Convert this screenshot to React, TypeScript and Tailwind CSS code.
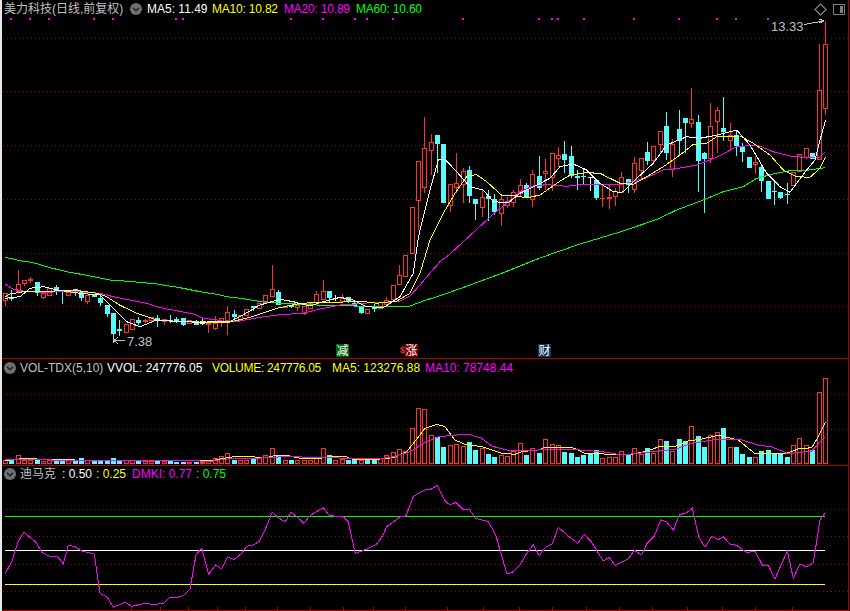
type C = [string, number, number, number?, number?];

const barX = (i: number) => Math.floor(5.33 + 6.357 * i);

const groupA: C[] = [
  ["r",160,180,160,197],["c",170,176,150,183],["r",132,153,90,155],["r",121,129,121,138],["R",117,122,112,128],
  ["c",126,158,126,167],["r",160,170,160,176],["r",143,164],["c",141,157,135,165],["c",153,155,153,191],
  ["r",155,164],["c",148,154,148,167],["c",155,174,155,182],["r",164,183,164,191],["c",166,172],
  ["c",174,188,168,197],["c",195,221,195,230],["c",219,282,219,308],["c",268,272,240,288],["r",252,276,252,280],
  ["r",238,266,238,268],["c",240,250,232,256],["R",240,245,236,250],["r",230,240,230,246],["c",234,240,225,260],
  ["r",236,244,236,255],["c",240,243,225,248],["c",236,243,232,248],["c",235,254,235,258],["r",240,250],
  ["c",244,254,240,256],["w",248,249,238,254],["R",250,256,250,280],["r",249,263,228,270],["r",235,247,235,262],
  ["r",216,240,198,285],["c",222,232,210,240],["r",226,240],["r",208,226],["c",198,203,198,213],
  ["r",190,204],["r",166,187],["r",148,167,75,172],["c",156,194,150,194],["R",198,203],
  ["c",194,200,194,205],["r",195,200,195,212],["r",199,218,199,226],["r",190,204],["r",163,187,153,187],
  ["r",154,177,120,177],["c",154,175,154,188],["w",173,174,165,182],["r",174,183,163,183],["c",172,186,172,190],
  ["c",190,198,180,198],["c",202,219,202,222],["r",207,220],["c",203,205,193,216],["r",185,203],
  ["r",181,192,170,192],["r",136,177],["r",106,132,75,132],["r",45,108],
];
const groupB: C[] = [
  ["r",290,428],["r",154,269,154,360],["r",115,231,22,250],["r",97,119,72,195],["c",75,101,75,188],
  ["c",102,278],["r",223,284,223,305],["r",220,231,130,250],["r",184,223,175,280],["c",181,258,168,278],
  ["c",268,282,268,330],["r",262,292,240,322],["c",258,266,240,333],["c",266,305,252,315],["r",268,310,256,347],
  ["r",272,284,262,293],["r",247,277,240,290],["r",226,248,208,260],["c",225,262,218,262],["r",193,268,180,290],
  ["c",198,233,138,240],["r",184,190,147,240],["r",130,200,130,243],["r",136,143,112,170],["c",132,150,94,188],
  ["c",138,198,108,205],["c",198,203,180,240],["c",198,200,178,222],["w",202,203,200,243],["c",210,264,210,270],
  ["R",264,268,225,290],["R",262,266,225,296],
];
const groupC: C[] = [
  ["r",333,347,325,377],["r",292,335,276,340],["c",298,316,298,340],["r",250,328,232,340],["r",235,270,235,300],
  ["c",216,243,186,255],["r",198,240,198,252],["r",154,191,154,220],["c",138,218,97,240],["r",193,268,178,290],
  ["c",148,182,90,225],["c",115,128,115,220],["r",118,130,25,145],["c",127,243,106,335],["c",220,236,215,398],
  ["r",139,235,68,250],["r",91,122,82,218],["c",144,155,52,182],["r",166,181,130,210],["c",166,198,150,228],
  ["c",200,215,190,245],["c",232,263,232,265],["r",247,253,227,282],["c",262,302,256,335],["c",303,357,303,357],
  ["c",333,334,303,374],["c",337,353,337,358],["c",342,343,310,371],["r",275,314],["r",221,274],
  ["r",205,232,205,238],["c",220,236],["r",31,238,-108,238],["r",-107,85,-177,105],
];

const toY = (base: number, g: C[]) =>
  g.map(([k, t, b, h, l]) => ({
    k,
    top: base + t / 3,
    bot: base + b / 3,
    hi: base + (h ?? t) / 3,
    lo: base + (l ?? b) / 3,
  }));
const candles = [...toY(240, groupA), ...toY(110, groupB), ...toY(80, groupC)];

const volTops = [
  316,316,300,314,314,316,318,316,314,314,316,316,309,316,318,314,316,310,314,316,314,314,318,318,316,318,318,320,320,320,
  320,320,314,308,304,295,315,316,314,310,308,300,280,304,316,316,316,314,314,310,280,300,316,312,314,314,316,314,314,310,
  300,292,283,288,220,160,162,240,246,276,270,267,273,261,285,280,297,306,300,303,287,265,300,280,294,253,268,271,291,294,
  306,300,294,286,310,307,307,289,300,280,296,279,294,253,258,288,252,258,214,243,276,240,232,219,277,276,297,306,306,288,
  285,294,296,306,271,250,271,286,112,70,
];
const volC =
  "rcrrrcrrccrccrcccccrrcrrcrcccr" +
  "crrrrrcrrcrrrcrcrrrrrcrrccrccr" +
  "rrrrrrrrccrrrccrccrrrrcrcrrrcc" +
  "ccccrrrrcrrcrrcrccrccrrcrcccrc" +
  "ccccrrrcrr";

type Pt = [number, number];
const pts = (bx: number, by: number, a: Pt[]): Pt[] => a.map(([x, y]) => [bx + x / 3, by + y / 3]);
const str = (a: Pt[]) => a.map(([x, y]) => `${x.toFixed(1)},${y.toFixed(1)}`).join(" ");

const ma60 = str([
  ...pts(0,240,[[16,52],[60,62],[100,68],[150,83],[200,95],[260,106],[330,120],[400,125],[470,132],[540,143],[600,155],[650,163]]),
  ...pts(210,240,[[50,170],[100,176],[140,183],[200,189],[300,194],[370,197],[430,198],[480,199],[540,200],[600,198],[640,183],[680,170],[720,157]]),
  [500,274],[540,258],[580,244],[620,232],
  ...pts(610,80,[[142,418],[200,390],[280,360],[340,335],[400,320],[440,295],[490,282],[540,272],[590,271],[644,263]]),
]);
const ma20 = str([
  ...pts(0,240,[[16,133],[40,148],[70,153],[130,157],[190,155],[250,156],[300,160],[340,170],[390,180],[440,190],[480,203],[530,212],[580,222],[610,235],[650,240]]),
  ...pts(210,240,[[50,246],[90,243],[150,232],[210,224],[280,220],[330,207],[390,195],[430,193],[480,188],[540,186],[570,183],[600,168],[630,135],[660,100],[690,65],[720,42]]),
  ...pts(380,110,[[288,360],[340,312],[380,280],[420,245],[460,228],[500,224],[560,229],[620,222],[720,224]]),
  ...pts(610,80,[[60,307],[110,293],[160,270],[200,266],[260,255],[320,232],[380,200],[440,195],[490,215],[540,228],[600,234],[630,232],[644,217]]),
]);
const ma10 = str([
  ...pts(0,240,[[16,170],[30,162],[70,155],[130,155],[220,150],[290,160],[320,170],[360,196],[410,220],[470,240],[530,245],[600,243]]),
  ...pts(210,240,[[0,248],[60,246],[120,232],[200,205],[260,192],[320,186],[400,186],[450,183],[500,190],[560,183],[600,160],[630,100],[660,0]]),
  ...pts(380,110,[[165,360],[190,310],[225,250],[262,197],[290,194],[320,215],[365,256],[400,256],[440,264],[480,255],[530,220],[570,195],[620,188],[660,190],[710,215]]),
  ...pts(610,80,[[0,295],[30,310],[70,313],[110,290],[160,260],[210,225],[250,193],[290,190],[320,170],[390,168],[430,190],[480,225],[520,270],[560,290],[600,292],[630,265],[647,230]]),
]);
const ma5 = str([
  ...pts(0,240,[[16,175],[60,170],[90,145],[130,140],[170,150],[240,160],[300,165],[340,205],[380,245],[420,260],[470,240],[540,245],[610,247]]),
  ...pts(210,240,[[0,245],[60,245],[90,230],[150,195],[210,178],[250,185],[300,198],[340,185],[390,172],[430,180],[470,200],[520,203],[570,170],[610,100],[624,0]]),
  ...pts(380,110,[[120,360],[150,240],[175,150],[195,148],[230,185],[270,230],[310,240],[340,275],[385,278],[420,250],[470,225],[510,205],[540,170],[580,162],[620,180],[660,220],[700,245],[720,247]]),
  ...pts(610,80,[[40,335],[80,295],[130,250],[170,195],[230,170],[270,175],[320,165],[380,150],[420,195],[470,280],[510,320],[540,337],[590,270],[615,240],[630,180],[647,120]]),
]);
const volY = str([
  ...pts(0,355,[[16,316],[80,310],[140,314],[500,318],[580,318],[640,316],[700,305],[750,305],[800,308],[830,300],[870,303],[910,312],[960,310],[1000,303],[1040,306],[1060,314],[1120,314],[1180,308],[1220,290],[1260,240]]),
  ...pts(425,355,[[0,220],[36,208],[60,215],[90,255],[120,268],[170,275],[230,295],[270,298],[290,290],[340,285],[360,277],[440,277],[480,295],[560,298],[620,298],[660,290],[700,276],[750,274],[790,258],[830,252],[880,241],[940,255],[990,296],[1080,296],[1120,282],[1160,278],[1180,245],[1201,202]]),
]);
const volM = str([
  ...pts(0,355,[[16,314],[600,318],[640,318],[680,312],[760,310],[800,308],[850,305],[960,307],[1040,310],[1100,312],[1170,308],[1230,290]]),
  ...pts(425,355,[[0,262],[40,246],[80,241],[130,238],[170,250],[200,273],[250,286],[300,287],[380,283],[440,283],[530,290],[590,300],[640,295],[700,288],[750,283],[800,265],[880,252],[940,252],[1000,270],[1040,276],[1090,296],[1160,288],[1201,245]]),
]);
const dmk = str([
  ...pts(0,465,[[16,325],[35,290],[55,228],[72,202],[108,232],[125,262],[150,274],[172,274],[190,296],[205,240],[225,245],[245,258],[283,267],[300,385],[322,397],[340,427],[375,412],[395,424],[430,416],[470,418],[492,414],[510,397],[530,398],[550,392],[570,372],[588,270],[605,250],[626,328],[647,300],[665,312],[682,276],[703,283],[725,265],[740,244],[760,240],[778,229],[795,195],[817,142],[835,158],[856,170],[873,142],[890,155],[912,175],[932,150],[970,128],[988,152],[1030,155],[1045,170],[1066,266],[1085,258],[1110,248],[1130,237],[1148,212],[1160,185],[1200,156],[1218,152],[1240,95],[1255,85]]),
  ...pts(425,465,[[0,75],[18,73],[36,61],[60,107],[75,120],[93,112],[114,134],[135,135],[150,160],[190,170],[212,210],[246,327],[265,320],[285,300],[305,265],[325,240],[343,272],[360,248],[382,237],[400,187],[430,213],[458,235],[478,208],[500,232],[535,288],[552,277],[570,301],[610,282],[628,256],[650,270],[665,237],[687,215],[707,165],[725,170],[745,196],[763,150],[785,143],[802,130],[822,218],[840,247],[860,214],[880,224],[895,215],[915,237],[935,241],[965,263],[990,258],[1012,300],[1030,300],[1050,342],[1087,258],[1105,340],[1125,297],[1145,306],[1165,294],[1185,165],[1200,145]]),
]);

const RED = "#ff3232";
const CYAN = "#54fcfc";

function Dotted({ ys }: { ys: number[] }) {
  return (
    <>
      {ys.map((y) => (
        <line key={y} x1={3} x2={848} y1={y + 0.5} y2={y + 0.5} stroke="#a00000" strokeDasharray="1 3" />
      ))}
    </>
  );
}

function Chevron() {
  return (
    <svg width="12" height="12" viewBox="0 0 12 12" className="shrink-0">
      <circle cx="6" cy="6" r="6" fill="#707070" />
      <path d="M3 4.8 L6 7.8 L9 4.8" fill="none" stroke="#222" strokeWidth="1.5" />
    </svg>
  );
}

function Candles() {
  return (
    <>
      {candles.map((c, i) => {
        const x = barX(i);
        const col = c.k === "c" ? CYAN : c.k === "w" ? "#ffffff" : RED;
        const t = Math.round(c.top);
        const b = Math.max(Math.round(c.bot), t + 1);
        const hi = Math.round(c.hi);
        const lo = Math.round(c.lo);
        return (
          <g key={i}>
            {hi < t && <line x1={x + 0.5} x2={x + 0.5} y1={hi} y2={t} stroke={col} />}
            {lo > b && <line x1={x + 0.5} x2={x + 0.5} y1={b} y2={lo} stroke={col} />}
            {c.k === "r" ? (
              <rect x={x - 1.5} y={t + 0.5} width={4} height={b - t} fill="#000" stroke={col} />
            ) : (
              <rect x={x - 2} y={t} width={5} height={b - t} fill={col} />
            )}
          </g>
        );
      })}
    </>
  );
}

function VolBars() {
  return (
    <>
      {volTops.map((z, i) => {
        const x = barX(i);
        const t = Math.round(355 + z / 3);
        const base = 464;
        return volC[i] === "c" ? (
          <rect key={i} x={x - 2} y={t} width={5} height={base - t} fill={CYAN} />
        ) : (
          <rect key={i} x={x - 1.5} y={t + 0.5} width={4} height={base - t - 1} fill="#000" stroke={RED} />
        );
      })}
    </>
  );
}

const marks = [11,30,49,94,113,176,183,291,323,355,367,393,463,539,552,558,584,634,679,717,736,768];
const ticks = [131,160,188,217,245,277,310,343,373,405,447,483,519,552,586,619,652,687,722,755,792];

export default function App() {
  return (
    <div className="w-[850px] h-[611px] bg-black flex flex-col overflow-hidden border-l-2 border-l-[#e8e8e8] pr-px text-xs leading-none" style={{ fontFamily: '"Liberation Sans","Noto Sans CJK SC",sans-serif' }}>
      {/* main */}
      <div className="relative h-[359px] shrink-0 border-b border-r border-[#b00000]">
        <svg className="absolute top-0 left-[-2px]" width="850" height="358" viewBox="0 0 850 358" shapeRendering="crispEdges">
          <Dotted ys={[38, 91, 145, 199, 253, 306]} />
          {marks.map((x) => (
            <rect key={x} x={x - 1} y={18} width={2} height={2} fill="#ff00ff" />
          ))}
          <Candles />
          <polyline points={ma60} fill="none" stroke="#00ff00" />
          <polyline points={ma20} fill="none" stroke="#ff00ff" />
          <polyline points={ma10} fill="none" stroke="#ffff00" />
          <polyline points={ma5} fill="none" stroke="#ffffff" />
          <path d="M804 24.5 L812 23 L824 21 M819 19 L824 21 L819 23" fill="none" stroke="#c0c0c0" />
          <path d="M125 340.5 L114 340.5 M118 337 L114 340.5 L118 344 M113.5 334 L113.5 340" fill="none" stroke="#c0c0c0" />
          <path d="M820.5 4 L826 9.5 L820.5 15 L815 9.5 Z" fill="none" stroke="#707070" />
          <rect x="833.5" y="4.5" width="11" height="10" rx="1.5" fill="none" stroke="#808080" strokeWidth="1.5" />
          <rect x="839.5" y="6" width="3.5" height="7" fill="#808080" />
        </svg>
        <div className="relative flex items-center h-[18px] pl-[2px] whitespace-nowrap">
          <span className="text-[#c0c0c0] w-[126px]">美力科技(日线,前复权)</span>
          <Chevron />
          <span className="text-white ml-[5px] w-[65px]">MA5: 11.49</span>
          <span className="text-[#ffff00] w-[72px] tracking-[-0.2px]">MA10: 10.82</span>
          <span className="text-[#ff00ff] w-[72px] tracking-[-0.2px]">MA20: 10.89</span>
          <span className="text-[#00ff00] tracking-[-0.2px]">MA60: 10.60</span>
        </div>
        <span className="absolute left-[769px] top-[20px] text-[13px] text-[#c0c0c0]">13.33</span>
        <span className="absolute left-[125px] top-[335px] text-[13px] text-[#c0c0c0]">7.38</span>
        <span className="absolute left-[334px] top-[344px] w-[13px] h-[13px] bg-[#006400] text-white flex items-center justify-center">减</span>
        <span className="absolute left-[398px] top-[346px] text-[#ff3232] font-bold text-[9px]">$</span>
        <span className="absolute left-[403px] top-[344px] w-[13px] h-[13px] bg-[#7a0000] text-white flex items-center justify-center">涨</span>
        <span className="absolute left-[536px] top-[344px] w-[13px] h-[13px] bg-[#12355b] text-white flex items-center justify-center">财</span>
      </div>
      {/* volume */}
      <div className="relative h-[107px] shrink-0 border-b border-r border-[#b00000]">
        <svg className="absolute top-0 left-[-2px]" width="850" height="106" viewBox="0 359 850 106" shapeRendering="crispEdges">
          <Dotted ys={[394, 429]} />
          <VolBars />
          <polyline points={volY} fill="none" stroke="#ffff00" />
          <polyline points={volM} fill="none" stroke="#ff00ff" />
        </svg>
        <div className="relative flex items-center h-[18px] pl-[2px] whitespace-nowrap">
          <Chevron />
          <span className="text-[#c0c0c0] ml-[4px] w-[87px]">VOL-TDX(5,10)</span>
          <span className="text-white w-[105px]">VVOL: 247776.05</span>
          <span className="text-[#ffff00] w-[120px] tracking-[-0.3px]">VOLUME: 247776.05</span>
          <span className="text-[#ffff00] w-[93px]">MA5: 123276.88</span>
          <span className="text-[#ff00ff]">MA10: 78748.44</span>
        </div>
      </div>
      {/* dmk */}
      <div className="relative h-[145px] shrink-0 border-b border-r border-[#b00000]">
        <svg className="absolute top-0 left-[-2px]" width="850" height="144" viewBox="0 466 850 144" shapeRendering="crispEdges">
          <Dotted ys={[509, 536, 564, 591]} />
          <line x1={5} x2={825} y1={516.5} y2={516.5} stroke="#00ff00" />
          <line x1={5} x2={825} y1={550.5} y2={550.5} stroke="#ffffff" />
          <line x1={5} x2={825} y1={584.5} y2={584.5} stroke="#ffff00" />
          <polyline points={dmk} fill="none" stroke="#ff00ff" />
          {ticks.map((x) => (
            <line key={x} x1={x + 0.5} x2={x + 0.5} y1={607} y2={610} stroke="#b00000" />
          ))}
        </svg>
        <div className="relative flex items-center h-[16px] pl-[2px] whitespace-nowrap">
          <Chevron />
          <span className="text-[#c0c0c0] ml-[4px] w-[42px]">迪马克</span>
          <span className="text-white w-[34px]">: 0.50</span>
          <span className="text-[#ffff00] w-[36px]">: 0.25</span>
          <span className="text-[#ff00ff] w-[64px]">DMKI: 0.77</span>
          <span className="text-[#00ff00]">: 0.75</span>
        </div>
      </div>
    </div>
  );
}
